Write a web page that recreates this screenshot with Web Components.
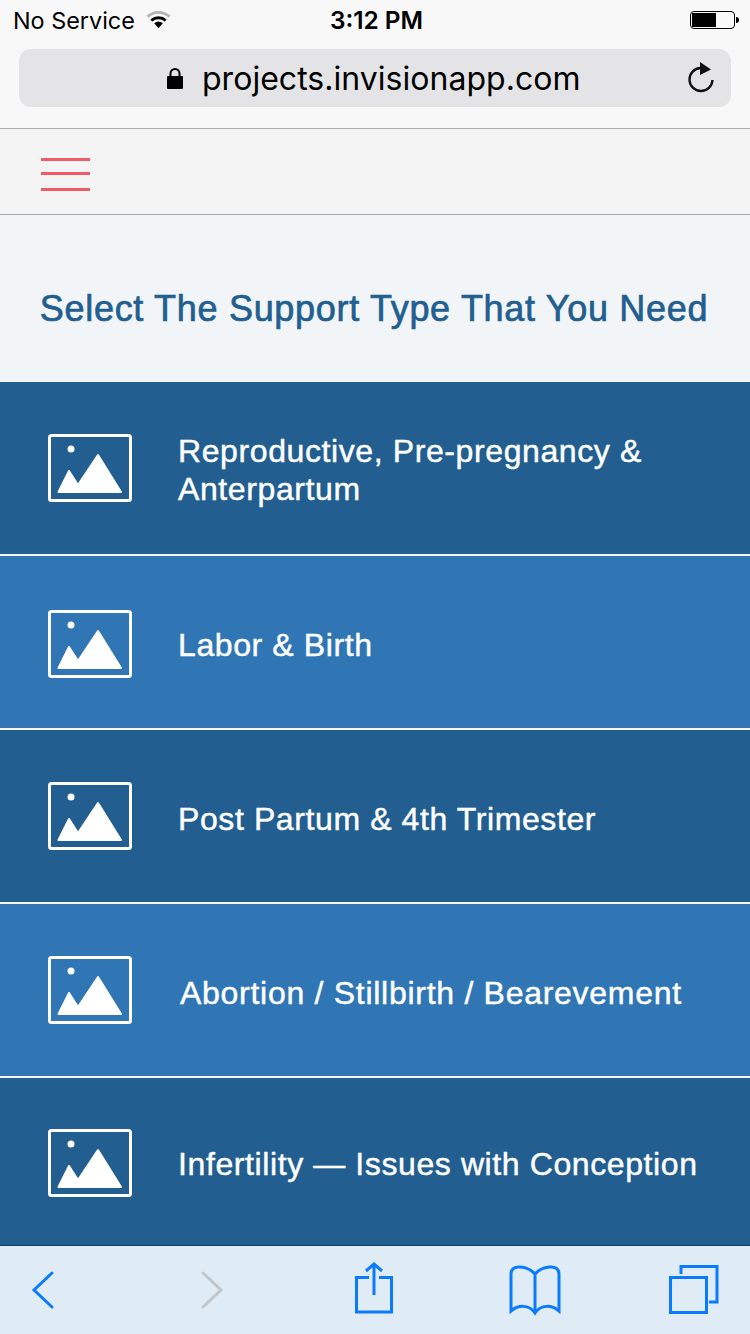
<!DOCTYPE html>
<html>
<head>
<meta charset="utf-8">
<title>Support Type</title>
<style>
  html, body { margin: 0; padding: 0; background: #f1f5f8; }
  body { width: 750px; height: 1334px; overflow: hidden; display: flex; flex-direction: column; font-family: "Inter", "Liberation Sans", sans-serif; }
</style>
</head>
<body>
<safari-header></safari-header>
<menu-bar></menu-bar>
<page-title>Select The Support Type That You Need</page-title>
<support-list>
  <support-row tone="dark" height="172" icon-top="0" text-top="4">Reproductive, Pre-pregnancy &amp;<br>Anterpartum</support-row>
  <support-row tone="light" height="172" icon-top="4" text-top="6">Labor &amp; Birth</support-row>
  <support-row tone="dark" height="172" icon-top="0" text-top="6">Post Partum &amp; 4th Trimester</support-row>
  <support-row tone="light" height="172" icon-top="0" text-top="6" shift="2" spacing="0.72">Abortion / Stillbirth / Bearevement</support-row>
  <support-row tone="dark" height="167" icon-top="3" text-top="4">Infertility — Issues with Conception</support-row>
</support-list>
<safari-toolbar></safari-toolbar>

<script>
class SafariHeader extends HTMLElement {
  constructor() {
    super();
    this.attachShadow({ mode: "open" });
    this.shadowRoot.innerHTML = `
      <style>
        :host { display: block; height: 128px; background: #f8f8f8; border-bottom: 1px solid #adadad; color: #000; font-family: "Inter", sans-serif; flex: none; }
        .status { height: 40px; padding: 0 18px 0 13px; display: grid; grid-template-columns: 1fr auto 1fr; align-items: center; font-size: 23.4px; }
        .left { display: flex; align-items: center; gap: 11px; }
        .time { font-weight: 600; font-size: 24.4px; margin-left: 8px; }
        .right { justify-self: end; display: flex; }
        .url { height: 58px; margin: 9px 19px 0; border-radius: 12px; background: #e4e4e7; display: flex; align-items: center; position: relative; }
        .addr { margin-left: 148px; display: flex; align-items: center; gap: 19px; font-size: 32px; letter-spacing: 0.03px; }
        .reload { position: absolute; right: 15px; top: 12px; }
      </style>
      <div class="status">
        <div class="left">
          <span>No Service</span>
          <svg width="25" height="20" viewBox="0 0 26 20">
            <path d="M1.5 6.5 A17 17 0 0 1 24.5 6.5" fill="none" stroke="#b4b4b4" stroke-width="3"/>
            <path d="M5.5 10.5 A11.5 11.5 0 0 1 20.5 10.5" fill="none" stroke="#000" stroke-width="3"/>
            <path d="M13 18.5 L8.5 13.5 A7 7 0 0 1 17.5 13.5 Z" fill="#000"/>
          </svg>
        </div>
        <span class="time">3:12 PM</span>
        <div class="right">
          <svg width="50" height="20" viewBox="0 0 50 20" style="margin-right:-8px">
            <rect x="0.5" y="1.5" width="44" height="17" rx="3.5" fill="none" stroke="#000" stroke-width="1"/>
            <rect x="2" y="3" width="24" height="14" fill="#000"/>
            <path d="M46 7 a3 3 0 0 1 0 6 Z" fill="#000"/>
          </svg>
        </div>
      </div>
      <div class="url">
        <div class="addr">
          <svg width="16" height="22" viewBox="0 0 16 22">
            <path d="M3.5 10 V6.5 a4.5 4.5 0 0 1 9 0 V10" fill="none" stroke="#000" stroke-width="2"/>
            <rect x="0" y="9" width="16" height="13" rx="1" fill="#000"/>
          </svg>
          <span>projects.invisionapp.com</span>
        </div>
        <svg class="reload" width="30" height="34" viewBox="0 0 30 34">
          <path d="M14.5 7 A11.5 11.5 0 1 0 26.5 19" fill="none" stroke="#111" stroke-width="2.4"/>
          <path d="M14 1 L25 8.5 L14 14 Z" fill="#111"/>
        </svg>
      </div>`;
  }
}

class MenuBar extends HTMLElement {
  constructor() {
    super();
    this.attachShadow({ mode: "open" });
    this.shadowRoot.innerHTML = `
      <style>
        :host { display: flex; align-items: center; height: 85px; padding-left: 41px; background: #f4f4f4; border-bottom: 1px solid #a6a6a6; flex: none; box-sizing: content-box; }
        .burger { width: 49px; margin-top: 6px; display: flex; flex-direction: column; gap: 11px; }
        .burger i { display: block; height: 3px; background: #ee5a66; }
        .burger i:last-child { margin-top: 2px; }
      </style>
      <div class="burger"><i></i><i></i><i></i></div>`;
  }
}

class PageTitle extends HTMLElement {
  constructor() {
    super();
    this.attachShadow({ mode: "open" });
    this.shadowRoot.innerHTML = `
      <style>
        :host { display: flex; align-items: center; justify-content: center; height: 167px; box-sizing: border-box; padding-top: 20px; padding-right: 2px; background: #f1f5f8; color: #225e8f; font-family: "Liberation Sans", sans-serif; font-size: 36px; letter-spacing: 0.7px; -webkit-text-stroke: 0.7px #225e8f; flex: none; white-space: nowrap; }
      </style>
      <slot></slot>`;
  }
}

class SupportList extends HTMLElement {
  constructor() {
    super();
    this.attachShadow({ mode: "open" });
    this.shadowRoot.innerHTML = `
      <style>
        :host { display: flex; flex-direction: column; gap: 2px; background: #f4f7fa; flex: none; }
      </style>
      <slot></slot>`;
  }
}

class SupportRow extends HTMLElement {
  constructor() {
    super();
    this.attachShadow({ mode: "open" });
    const shift = Number(this.getAttribute("shift") || 0);
    const iconTop = Number(this.getAttribute("icon-top") || 0);
    const textTop = Number(this.getAttribute("text-top") || 0);
    const spacing = this.getAttribute("spacing") || "0.6";
    this.shadowRoot.innerHTML = `
      <style>
        :host { display: flex; align-items: center; height: ${this.getAttribute("height")}px; padding-left: 48px; color: #fff; font-family: "Liberation Sans", sans-serif; font-size: 32px; letter-spacing: ${spacing}px; -webkit-text-stroke: 0.45px #fff; line-height: 38px; }
        :host([tone="dark"]) { background: #225e8f; }
        :host([tone="light"]) { background: #3076b5; }
        svg { flex: none; margin-right: ${46 + shift}px; margin-top: ${iconTop}px; }
        div { margin-top: ${textTop}px; white-space: nowrap; }
      </style>
      <svg width="84" height="68" viewBox="0 0 84 68">
        <rect x="1.5" y="1.5" width="81" height="65" rx="2" fill="none" stroke="#fff" stroke-width="3"/>
        <circle cx="23" cy="15" r="3.5" fill="#fff"/>
        <path d="M10.5 58 L21 37 L30 51 L50 21 L73 58 Z" fill="#fff" stroke="#fff" stroke-width="2" stroke-linejoin="round"/>
      </svg>
      <div><slot></slot></div>`;
  }
}

class SafariToolbar extends HTMLElement {
  constructor() {
    super();
    this.attachShadow({ mode: "open" });
    this.shadowRoot.innerHTML = `
      <style>
        :host { display: block; position: relative; height: 88px; background: #dfebf5; border-top: 1px solid #173f60; flex: none; }
        svg { display: block; width: 750px; height: 88px; }
        path, rect { fill: none; stroke: #0a7aff; stroke-width: 3; }
      </style>
      <svg viewBox="0 1246 750 88">
        <path d="M52 1273 L34 1290 L52 1307" stroke-linecap="round"/>
        <path d="M203 1273 L221 1290 L203 1307" style="stroke:#c2c7cc" stroke-linecap="round"/>
        <path d="M369 1277.5 H356.5 V1312 H391.5 V1277.5 H379"/>
        <path d="M374 1295 V1264 M366 1271 L374 1264 L382 1271" stroke-width="2.5"/>
        <path d="M535 1274 C530 1268 522 1266.5 518 1267 C513 1267.5 511 1270 511 1274 V1311 C518 1305 529 1304 535 1313 C541 1304 552 1305 559 1311 V1274 C559 1270 557 1267.5 552 1267 C548 1266.5 540 1268 535 1274 Z M535 1274 V1313" stroke-width="2.5"/>
        <rect x="670.5" y="1277.5" width="36" height="35"/>
        <path d="M681 1274 V1266.5 H717 V1302 H709"/>
      </svg>`;
  }
}

customElements.define("safari-header", SafariHeader);
customElements.define("menu-bar", MenuBar);
customElements.define("page-title", PageTitle);
customElements.define("support-list", SupportList);
customElements.define("support-row", SupportRow);
customElements.define("safari-toolbar", SafariToolbar);
</script>
</body>
</html>
